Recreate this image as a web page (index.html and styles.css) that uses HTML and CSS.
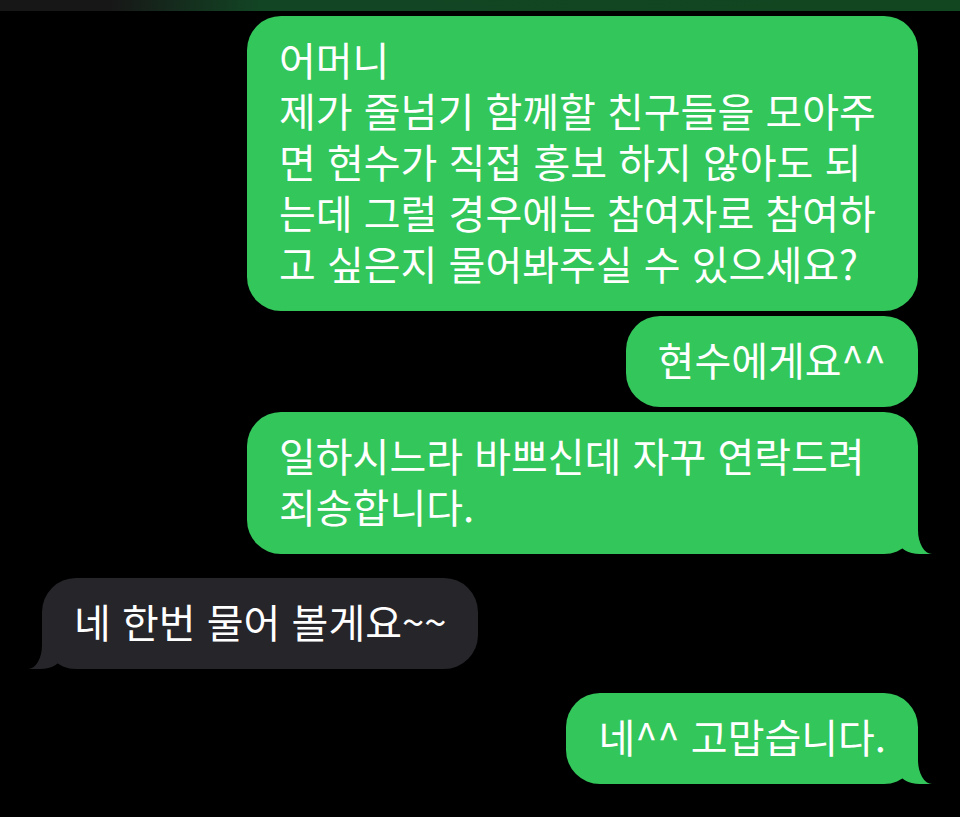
FILE: index.html
```html
<!DOCTYPE html>
<html lang="ko">
  <head>
    <meta charset="UTF-8" />
    <meta name="viewport" content="width=device-width, initial-scale=1.0" />
    <title>메시지</title>
    <link rel="stylesheet" href="styles.css">
  </head>
  <body>
    <div class="top-bar"></div>

    <div class="chat">
      <div class="msg sent full">어머니<br>제가 줄넘기 함께할 친구들을 모아주<br>면 현수가 직접 홍보 하지 않아도 되<br>는데 그럴 경우에는 참여자로 참여하<br>고 싶은지 물어봐주실 수 있으세요?</div>
      <div class="msg sent">현수에게요^^</div>
      <div class="msg sent full tail">일하시느라 바쁘신데 자꾸 연락드려<br>죄송합니다.</div>

      <div class="msg received tail new-turn">네 한번 물어 볼게요~~</div>

      <div class="msg sent tail new-turn">네^^ 고맙습니다.</div>
    </div>
  </body>
</html>
```

FILE: styles.css
```css
html, body {
  margin: 0;
  padding: 0;
  background-color: #000;
}
body {
  font-family: "Noto Sans CJK KR", "Noto Sans", sans-serif;
  color: #fff;
  overflow: hidden;
}
.top-bar {
  height: 11px;
  background: linear-gradient(to right, #171717 0, #171717 110px, #124524 260px, #114620 100%);
}
.chat {
  display: flex;
  flex-direction: column;
  padding: 5px 42px 0;
}
.msg {
  position: relative;
  max-width: 671px;
  box-sizing: border-box;
  padding: 18px 32px 22px;
  border-radius: 34px;
  font-size: 40px;
  line-height: 51px;
  white-space: nowrap;
  margin-top: 5px;
}
.msg:first-child {
  margin-top: 0;
}
.msg.new-turn {
  margin-top: 24px;
}
.msg.full {
  width: 671px;
}
.msg.sent {
  align-self: flex-end;
  background-color: #33c65b;
}
.msg.received {
  align-self: flex-start;
  background-color: #26252a;
}

/* bubble tails */
.msg.tail::before,
.msg.tail::after {
  content: "";
  position: absolute;
  bottom: 0;
  height: 34px;
}
.msg.sent.tail::before {
  right: -14px;
  width: 34px;
  background-color: #33c65b;
  border-bottom-left-radius: 22px 14px;
}
.msg.sent.tail::after {
  right: -42px;
  width: 42px;
  background-color: #000;
  border-bottom-left-radius: 14px 24px;
}
.msg.received.tail::before {
  left: -14px;
  width: 34px;
  background-color: #26252a;
  border-bottom-right-radius: 22px 14px;
}
.msg.received.tail::after {
  left: -42px;
  width: 42px;
  background-color: #000;
  border-bottom-right-radius: 14px 24px;
}
```
